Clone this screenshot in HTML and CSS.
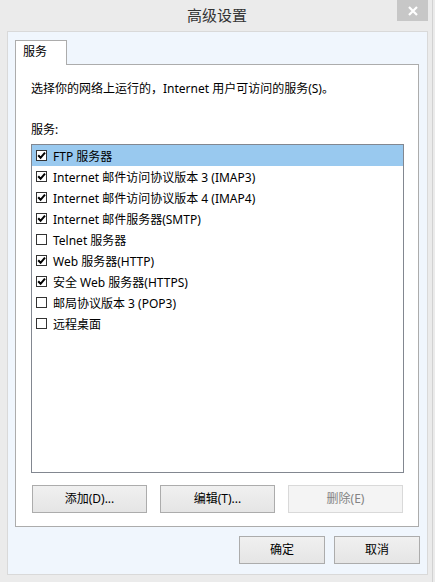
FILE: index.html
```html
<!DOCTYPE html>
<html lang="zh-CN">
<head>
<meta charset="utf-8">
<title>高级设置</title>
<link rel="stylesheet" href="styles.css">
</head>
<body>
<div class="window">
  <div class="titlebar">
    <div class="title">高级设置</div>
    <div class="close">
      <svg width="10" height="10" viewBox="0 0 10 10"><path d="M1 1L9 9M9 1L1 9" stroke="#fff" stroke-width="2.2" fill="none"/></svg>
    </div>
  </div>
  <div class="client">
    <div class="tabs"><div class="tab">服务</div></div>
    <div class="panel">
      <p class="desc">选择你的网络上运行的，Internet 用户可访问的服务(S)。</p>
      <p class="label">服务:</p>
      <div class="list">
        <div class="item selected"><span class="cb on"><svg width="9" height="9" viewBox="0 0 9 9"><path d="M1.2 4.2L3.6 6.8L8 1.6" stroke="#000" stroke-width="2" fill="none"/></svg></span>FTP 服务器</div>
        <div class="item"><span class="cb on"><svg width="9" height="9" viewBox="0 0 9 9"><path d="M1.2 4.2L3.6 6.8L8 1.6" stroke="#000" stroke-width="2" fill="none"/></svg></span>Internet 邮件访问协议版本 3 (IMAP3)</div>
        <div class="item"><span class="cb on"><svg width="9" height="9" viewBox="0 0 9 9"><path d="M1.2 4.2L3.6 6.8L8 1.6" stroke="#000" stroke-width="2" fill="none"/></svg></span>Internet 邮件访问协议版本 4 (IMAP4)</div>
        <div class="item"><span class="cb on"><svg width="9" height="9" viewBox="0 0 9 9"><path d="M1.2 4.2L3.6 6.8L8 1.6" stroke="#000" stroke-width="2" fill="none"/></svg></span>Internet 邮件服务器(SMTP)</div>
        <div class="item"><span class="cb"></span>Telnet 服务器</div>
        <div class="item"><span class="cb on"><svg width="9" height="9" viewBox="0 0 9 9"><path d="M1.2 4.2L3.6 6.8L8 1.6" stroke="#000" stroke-width="2" fill="none"/></svg></span>Web 服务器(HTTP)</div>
        <div class="item"><span class="cb on"><svg width="9" height="9" viewBox="0 0 9 9"><path d="M1.2 4.2L3.6 6.8L8 1.6" stroke="#000" stroke-width="2" fill="none"/></svg></span>安全 Web 服务器(HTTPS)</div>
        <div class="item"><span class="cb"></span>邮局协议版本 3 (POP3)</div>
        <div class="item"><span class="cb"></span>远程桌面</div>
      </div>
      <div class="btnrow">
        <div class="btn">添加(D)...</div>
        <div class="btn">编辑(T)...</div>
        <div class="btn disabled">删除(E)</div>
      </div>
    </div>
    <div class="footer">
      <div class="btn small">确定</div>
      <div class="btn small">取消</div>
    </div>
  </div>
</div>
</body>
</html>
```

FILE: styles.css
```css
* { box-sizing: border-box; }
html, body { margin: 0; padding: 0; }
body {
  width: 435px;
  height: 582px;
  background: #ebebeb;
  font-family: "Noto Sans", "Noto Sans CJK SC", sans-serif;
  font-size: 12px;
  color: #000;
  overflow: hidden;
}
.window {
  width: 433px;
  height: 582px;
  border-right: 1px solid #d2d2d2;
  position: relative;
}
.titlebar {
  height: 31px;
  display: flex;
  justify-content: center;
  align-items: flex-start;
  position: relative;
}
.title {
  font-size: 15px;
  line-height: 20px;
  padding-top: 5px;
  padding-left: 2px;
  color: #333;
}
.close {
  position: absolute;
  top: 0;
  left: 397px;
  width: 31px;
  height: 21px;
  background: #c7c7c7;
  display: flex;
  align-items: center;
  justify-content: center;
}
.client {
  margin-left: 7px;
  width: 421px;
  height: 544px;
  border: 1px solid #d9d9d9;
  background: #f0f6fd;
  padding: 8px 0 0 7px;
  position: relative;
}
.tabs { display: flex; height: 24px; }
.tab {
  width: 52px;
  height: 25px;
  border: 1px solid #acacac;
  border-bottom: none;
  background: #fff;
  padding-left: 7px;
  line-height: 22px;
  position: relative;
  z-index: 1;
}
.panel {
  width: 404px;
  height: 463px;
  border: 1px solid #acacac;
  background: #fff;
  padding: 16px 14px 0 15px;
}
.desc { margin: 0; line-height: 16px; }
.label { margin: 25px 0 0; line-height: 16px; }
.list {
  margin-top: 6px;
  width: 373px;
  height: 329px;
  border: 1px solid #828790;
}
.item {
  height: 21px;
  display: flex;
  align-items: center;
  padding-left: 4px;
  white-space: nowrap;
}
.item.selected { background: #99c9ef; }
.cb {
  width: 11px;
  height: 11px;
  border: 1px solid #333;
  background: #fff;
  margin-right: 6px;
  display: flex;
  align-items: center;
  justify-content: center;
  flex: none;
}
.cb svg { display: block; }
.btnrow {
  margin-top: 12px;
  width: 373px;
  padding: 0 1px;
  display: flex;
  justify-content: space-between;
}
.btn {
  width: 115px;
  height: 28px;
  border: 1px solid #acacac;
  background: linear-gradient(#f0f0f0, #e5e5e5);
  display: flex;
  align-items: center;
  justify-content: center;
  line-height: 16px;
}
.btn.disabled {
  border-color: #d9d9d9;
  background: #f4f4f4;
  color: #838383;
}
.footer {
  display: flex;
  justify-content: flex-end;
  gap: 9px;
  margin-top: 9px;
  width: 405px;
}
.btn.small { width: 86px; }
```
